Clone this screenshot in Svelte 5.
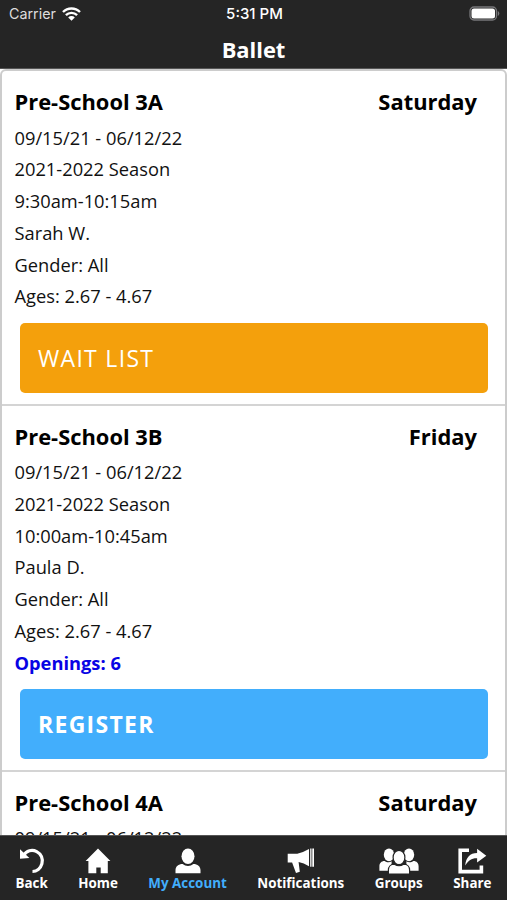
<script lang="ts">
	type ClassItem = {
		name: string;
		day: string;
		time: string;
		teacher: string;
		openings?: number;
	};

	const dates = '09/15/21 - 06/12/22';
	const season = '2021-2022 Season';

	const classes: ClassItem[] = [
		{ name: 'Pre-School 3A', day: 'Saturday', time: '9:30am-10:15am', teacher: 'Sarah W.' },
		{ name: 'Pre-School 3B', day: 'Friday', time: '10:00am-10:45am', teacher: 'Paula D.', openings: 6 },
		{ name: 'Pre-School 4A', day: 'Saturday', time: '', teacher: '' }
	];

	const tabs = [
		{ id: 'back', label: 'Back' },
		{ id: 'home', label: 'Home' },
		{ id: 'account', label: 'My Account' },
		{ id: 'notifications', label: 'Notifications' },
		{ id: 'groups', label: 'Groups' },
		{ id: 'share', label: 'Share' }
	];

	let active = $state('account');
</script>

<div class="app">
	<header>
		<div class="status">
			<div class="carrier">
				<span>Carrier</span>
				<svg width="19" height="14" viewBox="0 0 19 14">
					<path d="M1 5a12 12 0 0 1 17 0M3.9 8.2a8 8 0 0 1 11.2 0" fill="none" stroke="#fff" stroke-width="2.4" />
					<path d="M6.2 10.4a4.6 4.6 0 0 1 6.6 0l-3.3 3.4z" fill="#fff" />
				</svg>
			</div>
			<span class="clock">5:31 PM</span>
			<div class="battery">
				<svg width="31" height="15" viewBox="0 0 31 15">
					<rect x="1" y="1" width="26.5" height="13" rx="4" fill="none" stroke="#77777a" stroke-width="1.3" />
					<rect x="2.5" y="2.5" width="23.5" height="10" rx="2.5" fill="#fff" />
					<path d="M28.8 5v5q1.5-.8 1.5-2.5T28.8 5z" fill="#77777a" />
				</svg>
			</div>
		</div>
		<h1>Ballet</h1>
	</header>

	<main>
		<div class="list">
			{#each classes as item}
				<section class="card">
					<div class="card-head">
						<h2>{item.name}</h2>
						<h2>{item.day}</h2>
					</div>
					<p>{dates}</p>
					{#if item.time}
						<p>{season}</p>
						<p>{item.time}</p>
						<p>{item.teacher}</p>
						<p>Gender: All</p>
						<p>Ages: 2.67 - 4.67</p>
						{#if item.openings}
							<p class="openings">Openings: {item.openings}</p>
							<button class="register">REGISTER</button>
						{:else}
							<button class="waitlist">WAIT LIST</button>
						{/if}
					{/if}
				</section>
			{/each}
		</div>
	</main>

	<nav>
		{#each tabs as tab}
			<button class="tab" class:active={active === tab.id} onclick={() => (active = tab.id)}>
				{#if tab.id === 'back'}
					<svg width="26" height="26" viewBox="0 0 26 26">
						<path d="M4.5 7.3C7.4 2.6 13 1.2 17.7 3.6c4.4 2.3 6.7 7.2 5.2 12.2-1.3 4.7-5.3 7.7-9.4 7.7" fill="none" stroke="#fff" stroke-width="3.2" />
						<path d="M1 1.2v9.6l9.4-.8z" fill="#fff" />
					</svg>
				{:else if tab.id === 'home'}
					<svg width="26" height="26" viewBox="0 0 26 26">
						<path d="M13 .6 25.4 13h-2.6v12.2h-7.1v-5.6h-4.4v5.6H3.4V13H.6z" fill="#fff" />
					</svg>
				{:else if tab.id === 'account'}
					<svg width="26" height="26" viewBox="0 0 26 26">
						<ellipse cx="13" cy="8.2" rx="6.5" ry="7.8" fill="#fff" />
						<path d="M.5 25.3v-3.1c0-3.6 2.9-6.1 7.2-6.1 2.9 2.5 7.7 2.5 10.6 0 4.3 0 7.2 2.5 7.2 6.1v3.1z" fill="#fff" />
					</svg>
				{:else if tab.id === 'notifications'}
					<svg width="28" height="26" viewBox="0 0 28 26">
						<path d="M.7 5.8h9.6q6-1.3 11.7-4.7v17.1q-5.2-3.3-10.4-4.2l1.2 9.8-3.8 1.2-3.9-10.4H.7z" fill="#fff" />
						<path d="M23.2.6h1.3v18.2h-1.3zM25.3.6H27v18.2h-1.7z" fill="#fff" />
					</svg>
				{:else if tab.id === 'groups'}
					<svg width="40" height="26" viewBox="0 0 40 26">
						<g fill="#fff">
							<ellipse cx="10" cy="6.8" rx="5.2" ry="6.4" />
							<ellipse cx="30" cy="6.8" rx="5.2" ry="6.4" />
							<path d="M.4 22.7v-4.5c0-3.2 2-5.3 5.2-5.3 1.8 1.6 5.1 2 7 .3v9.5zM39.6 22.7v-4.5c0-3.2-2-5.3-5.2-5.3-1.8 1.6-5.1 2-7 .3v9.5z" />
						</g>
						<g fill="#fff" stroke="#252525" stroke-width="1.2">
							<path d="M9.4 26.2v-4.1c0-3.3 2.3-5.9 6-5.9 2.8 1.9 6.4 1.9 9.2 0 3.7 0 6 2.6 6 5.9v4.1z" />
							<ellipse cx="20" cy="9.5" rx="5.9" ry="7.2" />
						</g>
					</svg>
				{:else}
					<svg width="29" height="26" viewBox="0 0 29 26">
						<path d="M11 2.2H2.2v21.4h21.2v-6" fill="none" stroke="#fff" stroke-width="3.6" />
						<path d="M7.2 17.4C8 9.4 12 5.1 19.1 5V.8l9.2 7-9.2 6.6v-4.1c-5.6-.2-8.4 2.2-11.9 7.1z" fill="#fff" />
					</svg>
				{/if}
				<span>{tab.label}</span>
			</button>
		{/each}
	</nav>
</div>

<style>
	:global(body) {
		margin: 0;
		background: #fff;
	}

	.app {
		display: flex;
		flex-direction: column;
		width: 100%;
		height: 100vh;
		overflow: hidden;
		color: #111;
		font-family: 'Open Sans', 'Noto Sans', sans-serif;
	}

	header {
		flex: none;
		box-sizing: border-box;
		height: 69px;
		background: #252525;
		border-bottom: 1px solid #555;
		color: #fff;
	}

	.status {
		display: grid;
		grid-template-columns: 1fr auto 1fr;
		align-items: center;
		height: 27px;
		padding: 0 7px 0 9px;
		font-family: Inter, sans-serif;
		font-size: 15px;
	}

	.carrier {
		display: flex;
		align-items: center;
		gap: 6px;
		color: #ddd;
		font-size: 14.3px;
	}

	.clock {
		font-weight: 500;
	}

	.battery {
		display: flex;
		justify-content: flex-end;
	}

	h1 {
		margin: 0;
		font-size: 21.9px;
		line-height: 45px;
		text-align: center;
	}

	main {
		flex: 1;
		min-height: 0;
		overflow: hidden;
	}

	.list {
		border: 2px solid #ccc;
		border-radius: 6px;
	}

	.card {
		box-sizing: border-box;
		padding: 13px 12px 11px 12.5px;
		border-bottom: 2px solid #d4d4d4;
	}

	.card-head {
		display: flex;
		justify-content: space-between;
		padding-right: 16px;
		margin-bottom: 1.5px;
	}

	h2 {
		margin: 0;
		color: #000;
		font-size: 21.9px;
		line-height: 36px;
	}

	p {
		margin: 0;
		font-size: 18.3px;
		line-height: 31.75px;
	}

	.openings {
		color: #0803e4;
		font-weight: 700;
	}

	.card button {
		display: block;
		width: calc(100% - 10.5px);
		height: 69.5px;
		margin: 11px 5px 0 5.5px;
		padding: 0 18px;
		border: 0;
		border-radius: 5px;
		color: #fff;
		font-family: inherit;
		font-size: 23px;
		letter-spacing: 1.3px;
		text-align: left;
	}

	.card .waitlist {
		background: #f4a00c;
	}

	.card .register {
		background: #42aefc;
		font-weight: 700;
	}

	nav {
		flex: none;
		display: flex;
		justify-content: space-between;
		box-sizing: border-box;
		height: 65px;
		padding: 12px 15.5px 0;
		background: #252525;
		border-top: 1px solid #555;
	}

	.tab {
		display: flex;
		flex-direction: column;
		align-items: center;
		padding: 0;
		border: 0;
		background: none;
		color: #fff;
		font-family: inherit;
		font-size: 13.4px;
		font-weight: 700;
		line-height: 18px;
	}

	.tab span {
		white-space: nowrap;
	}

	.tab.active {
		color: #42aefc;
	}
</style>
